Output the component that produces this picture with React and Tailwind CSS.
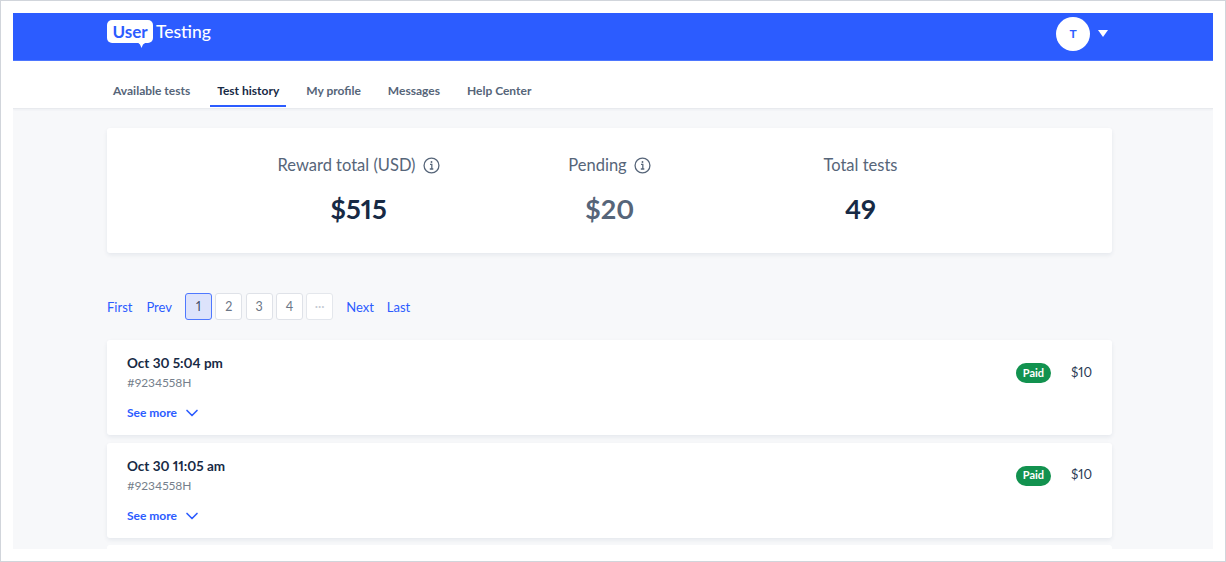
import { ChevronDown } from "lucide-react";

const FONT = "font-['Lato','Open_Sans',sans-serif] proportional-nums";

const tabs = ["Available tests", "Test history", "My profile", "Messages", "Help Center"];

const tests = [
  { date: "Oct 30 5:04 pm", id: "#9234558H", amount: "$10" },
  { date: "Oct 30 11:05 am", id: "#9234558H", amount: "$10" },
];

function InfoIcon() {
  return (
    <svg width="17" height="17" viewBox="0 0 16 16" fill="none" className="text-[#566579]">
      <circle cx="8" cy="8" r="7" stroke="currentColor" strokeWidth="1.2" />
      <circle cx="8" cy="4.7" r="0.9" fill="currentColor" />
      <path d="M6.6 7h1.7v4.2M6.4 11.3h3.3" stroke="currentColor" strokeWidth="1.2" />
    </svg>
  );
}

function Logo() {
  return (
    <div className="flex items-start">
      <div className="relative flex h-[23px] w-[46px] items-center justify-center rounded-[5px] bg-white text-[17px] font-bold text-[#2c5cff]">
        User
        <svg width="12" height="7" viewBox="0 0 12 7" className="absolute -bottom-[5px] right-[5px]">
          <path d="M0 0h12L7 3.5 5.5 7 4 3.5z" fill="#fff" />
        </svg>
      </div>
      <div className="ml-[3px] flex h-[23px] items-center pt-[2px] text-[17.5px] font-medium text-white">Testing</div>
    </div>
  );
}

function Stat({ label, value, info, muted }) {
  return (
    <div className="flex w-[251px] flex-col items-center">
      <div className="flex h-[20px] items-center gap-[7px] text-[16.5px] text-[#566579]">
        {label}
        {info && <InfoIcon />}
      </div>
      <div className={`mt-[17px] text-[27px] leading-[34px] font-bold ${muted ? "text-[#566579]" : "text-[#172a45]"}`}>
        {value}
      </div>
    </div>
  );
}

function PageBox({ children, active, faded }) {
  return (
    <div
      className={`flex h-[27px] w-[27px] items-center justify-center rounded-[3px] border pt-[2px] text-[12.5px] ${
        active
          ? "border-[#4f78ff] bg-[#dde3fb] text-[#3b4a63]"
          : faded
            ? "border-[#e4e7ec] bg-white text-[#c5cad3]"
            : "border-[#dfe2e8] bg-white text-[#6b7686]"
      }`}
    >
      {children}
    </div>
  );
}

function TestRow({ date, id, amount }) {
  return (
    <div className="flex h-[95px] shrink-0 justify-between rounded-[3px] bg-white pt-[14px] pr-[20px] pl-[20px] shadow-[0_2px_4px_rgba(30,50,90,0.08)]">
      <div>
        <div className="text-[13.5px] leading-[18px] font-bold text-[#172a45]">{date}</div>
        <div className="mt-[3px] text-[12px] leading-[16px] text-[#767f8c]">{id}</div>
        <div className="mt-[12px] flex items-center gap-[5px] text-[12px] leading-[16px] font-bold text-[#2c5cff]">
          See more
          <ChevronDown size={20} strokeWidth={2} />
        </div>
      </div>
      <div className="mt-[9px] flex h-[20px] items-center">
        <span className="flex h-[20px] w-[35px] items-center justify-center rounded-full bg-[#12924f] text-[11px] font-bold text-white">
          Paid
        </span>
        <span className="mb-[1px] ml-[20px] w-[21px] text-[13px] text-[#2a3a55]">{amount}</span>
      </div>
    </div>
  );
}

export default function App() {
  return (
    <div className={`${FONT} h-[562px] w-[1226px] overflow-hidden border border-[#d1d5db] bg-white p-[12px]`}>
      <div className="flex h-[536px] w-[1200px] flex-col overflow-hidden bg-[#f7f8fa]">
        {/* Header */}
        <div className="flex h-[48px] shrink-0 items-start justify-between border-b border-[#4d76ff] bg-[#2c5cff] pt-[7px] pr-[105px] pl-[94px]">
          <Logo />
          <div className="flex items-center gap-[8px]">
            <div className="-mt-[3px] flex h-[34px] w-[34px] items-center justify-center rounded-full bg-white text-[12px] font-bold text-[#2c5cff]">
              T
            </div>
            <svg width="10" height="7" viewBox="0 0 10 7" className="-mt-[4px]">
              <path d="M0 0h10L5 7z" fill="#fff" />
            </svg>
          </div>
        </div>

        {/* Tabs */}
        <div className="flex h-[48px] shrink-0 gap-[13px] border-b border-[#e8eaee] bg-white pl-[93px] shadow-[0_1px_2px_rgba(30,50,90,0.05)]">
          {tabs.map((t) => (
            <div
              key={t}
              className={`flex h-[46px] items-center border-b-2 px-[7px] pt-[15px] text-[12px] font-bold ${
                t === "Test history" ? "border-[#2c5cff] text-[#172a45]" : "border-transparent text-[#566579]"
              }`}
            >
              {t}
            </div>
          ))}
        </div>

        <div className="ml-[94px] flex w-[1005px] flex-col pt-[19px]">
          {/* Summary */}
          <div className="flex h-[125px] shrink-0 justify-center rounded-[3px] bg-white pt-[27px] shadow-[0_2px_4px_rgba(30,50,90,0.08)]">
            <Stat label="Reward total (USD)" value="$515" info />
            <Stat label="Pending" value="$20" info muted />
            <Stat label="Total tests" value="49" />
          </div>

          {/* Pagination */}
          <div className="mt-[40px] flex h-[27px] items-center text-[13px] text-[#2c5cff]">
            <span className="mr-[14px] pt-[2px]">First</span>
            <span className="mr-[13px] pt-[2px]">Prev</span>
            <div className="flex gap-[3.3px]">
              <PageBox active>1</PageBox>
              <PageBox>2</PageBox>
              <PageBox>3</PageBox>
              <PageBox>4</PageBox>
              <PageBox faded>···</PageBox>
            </div>
            <span className="ml-[13px] pt-[2px]">Next</span>
            <span className="ml-[13px] pt-[2px]">Last</span>
          </div>

          {/* Test list */}
          <div className="mt-[20px] flex flex-col gap-[7.5px]">
            {tests.map((t) => (
              <TestRow key={t.date} {...t} />
            ))}
            <div className="h-[95px] shrink-0 rounded-[3px] bg-white" />
          </div>
        </div>
      </div>
    </div>
  );
}
